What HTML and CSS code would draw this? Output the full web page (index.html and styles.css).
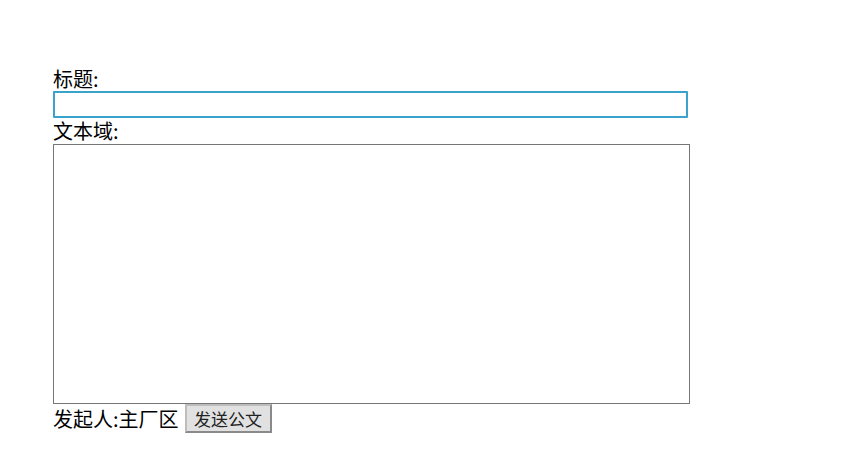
FILE: index.html
```html
<!DOCTYPE html>
<html lang="zh">
<head>
    <meta charset="UTF-8">
    <title>发送公文</title>
    <link rel="stylesheet" href="styles.css">
</head>
<body>
    <form class="docForm" action="">
        <label class="lbl">标题:</label>
        <input class="title" type="text">
        <label class="lbl lbl2">文本域:</label>
        <textarea class="content"></textarea>
        <div class="sendRow">
            <span>发起人:主厂区</span>
            <button type="button">发送公文</button>
        </div>
    </form>
</body>
</html>
```
FILE: styles.css
```css
* {
    margin: 0;
    padding: 0;
    box-sizing: border-box;
}

body {
    background: #fff;
    font-family: "Noto Sans CJK SC", "Liberation Sans", sans-serif;
    font-size: 20px;
    color: #000;
}

.docForm {
    display: flex;
    flex-direction: column;
    align-items: flex-start;
    padding: 66px 0 0 53px;
}

.lbl {
    line-height: 25px;
    height: 25px;
}

.lbl2 {
    line-height: 26px;
    height: 26px;
}

.title {
    width: 635px;
    height: 27px;
    border: 2px solid #3aa3cc;
    border-radius: 1px;
    outline: none;
    background: #fff;
}

.content {
    width: 637px;
    height: 260px;
    border: 1px solid #767676;
    resize: none;
    outline: none;
}

.sendRow {
    display: flex;
    align-items: center;
    gap: 6px;
    height: 29px;
}

.sendRow span {
    line-height: 29px;
}

button {
    font-family: "Noto Sans CJK SC", "Liberation Sans", sans-serif;
    font-size: 17px;
    color: #222;
    width: 87px;
    height: 29px;
    background: #e1e1e1;
    border: 2px solid #8a8a8a;
    border-top-color: #bdbdbd;
    border-left-color: #bdbdbd;
    border-radius: 0;
}
```
